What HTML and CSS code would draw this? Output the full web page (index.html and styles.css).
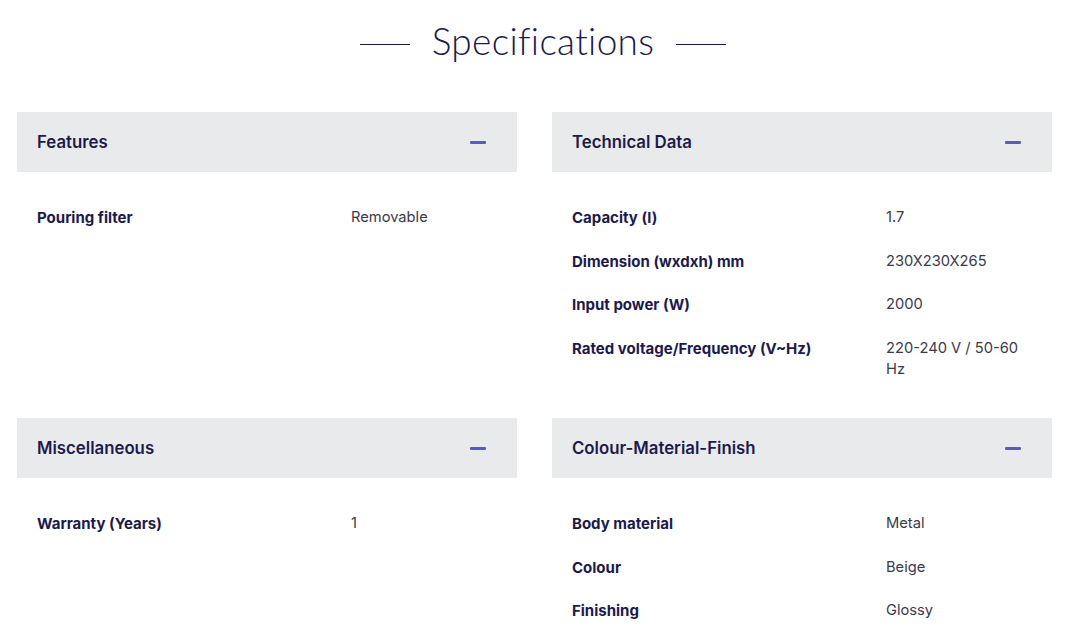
FILE: index.html
```html
<!DOCTYPE html>
<html lang="en">
<head>
<meta charset="utf-8">
<title>Specifications</title>
<link rel="stylesheet" href="styles.css">
</head>
<body>
<div class="page">
  <div class="title-row">
    <span class="title-line"></span>
    <h1 class="title">Specifications</h1>
    <span class="title-line"></span>
  </div>
  <div class="grid">
    <section class="panel">
      <div class="panel-head"><span class="panel-title">Features</span><span class="minus"></span></div>
      <div class="rows">
        <div class="row"><div class="label">Pouring filter</div><div class="value">Removable</div></div>
      </div>
    </section>
    <section class="panel">
      <div class="panel-head"><span class="panel-title">Technical Data</span><span class="minus"></span></div>
      <div class="rows">
        <div class="row"><div class="label">Capacity (l)</div><div class="value">1.7</div></div>
        <div class="row"><div class="label">Dimension (wxdxh) mm</div><div class="value">230X230X265</div></div>
        <div class="row"><div class="label">Input power (W)</div><div class="value">2000</div></div>
        <div class="row"><div class="label">Rated voltage/Frequency (V~Hz)</div><div class="value">220-240 V / 50-60 Hz</div></div>
      </div>
    </section>
    <section class="panel">
      <div class="panel-head"><span class="panel-title">Miscellaneous</span><span class="minus"></span></div>
      <div class="rows">
        <div class="row"><div class="label">Warranty (Years)</div><div class="value">1</div></div>
      </div>
    </section>
    <section class="panel">
      <div class="panel-head"><span class="panel-title">Colour-Material-Finish</span><span class="minus"></span></div>
      <div class="rows">
        <div class="row"><div class="label">Body material</div><div class="value">Metal</div></div>
        <div class="row"><div class="label">Colour</div><div class="value">Beige</div></div>
        <div class="row"><div class="label">Finishing</div><div class="value">Glossy</div></div>
      </div>
    </section>
  </div>
</div>
</body>
</html>
```

FILE: styles.css
```css
* { box-sizing: border-box; }
html, body { margin: 0; padding: 0; background: #fff; }
body {
  font-family: "Inter", "Roboto", "Liberation Sans", sans-serif;
  color: #1c1a4a;
}
.page {
  width: 1090px;
  padding: 0 38px 0 17px;
}
.title-row {
  display: flex;
  align-items: center;
  justify-content: center;
  gap: 22px;
  height: 84px;
  padding-left: 17px;
  margin-bottom: 28px;
}
.title-line {
  width: 50px;
  height: 1px;
  background: #1c1a4a;
  margin-top: 4px;
}
.title {
  margin: 0 0 4px;
  font-family: "Lato", "Open Sans", sans-serif;
  font-weight: 300;
  font-size: 37px;
  letter-spacing: 0.3px;
  color: #1c1a4a;
  line-height: 1;
}
.grid {
  display: grid;
  grid-template-columns: 500px 500px;
  column-gap: 35px;
}
.panel-head {
  height: 60px;
  background: #e9eaec;
  display: flex;
  align-items: center;
  justify-content: space-between;
  padding: 0 31px 0 20px;
}
.panel-title {
  font-size: 16.8px;
  font-weight: 600;
  color: #1c1a4a;
}
.minus {
  width: 16px;
  height: 3px;
  background: #5a5cb8;
  border-radius: 1px;
}
.rows {
  padding: 24px 0 26.5px;
}
.row {
  display: flex;
  padding: 11px 20px;
  line-height: 21.5px;
}
.label {
  width: 314px;
  flex: none;
  font-size: 15px;
  font-weight: 700;
  color: #1c1a4a;
}
.value {
  width: 145px;
  font-size: 14.7px;
  color: #3a3a4a;
  font-weight: 400;
}
```
